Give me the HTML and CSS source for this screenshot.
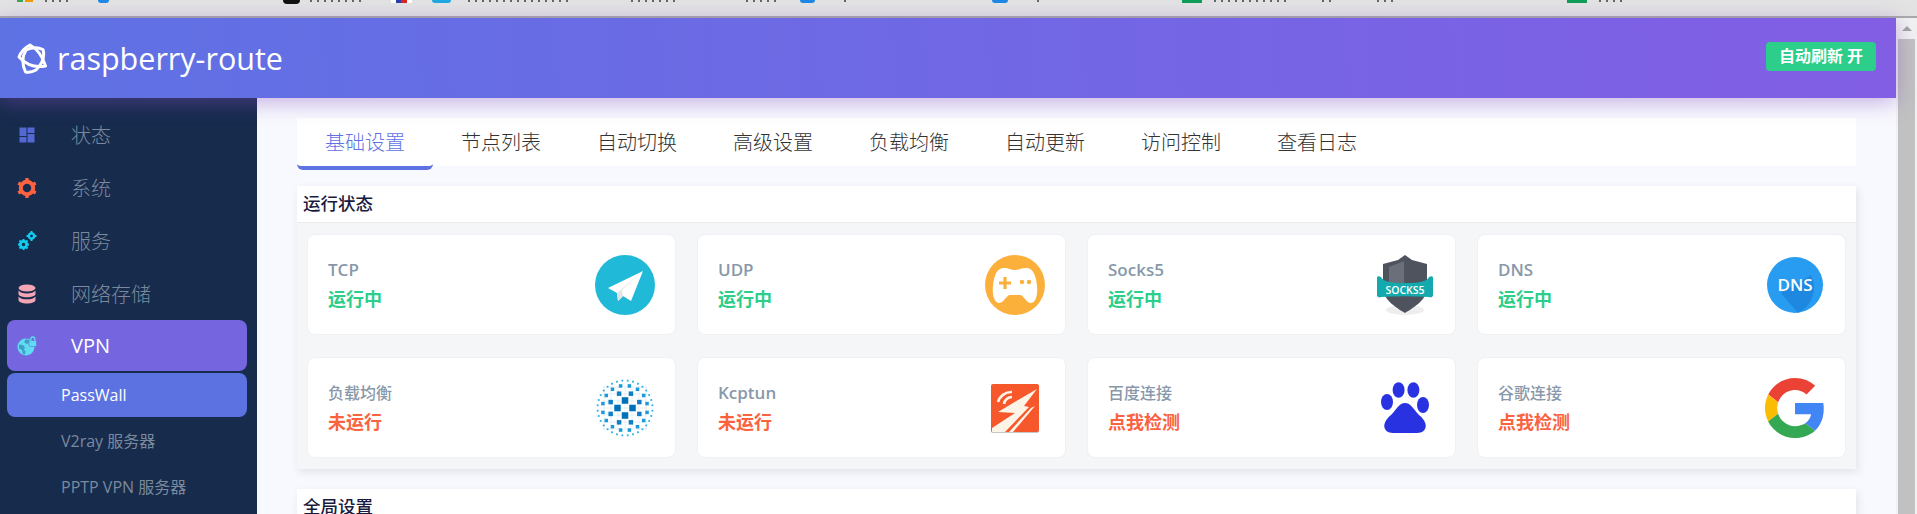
FILE: index.html
```html
<!DOCTYPE html>
<html lang="zh-CN">
<head>
	<meta charset="UTF-8">
	<title>raspberry-route</title>
	<link rel="stylesheet" href="styles.css">
</head>
<body>

<div class="bookmarks" id="bookmarks"></div>

<div class="window">
	<div class="page">
		<header class="topbar">
			<div class="brand">
				<svg class="brand-logo" viewBox="0 0 30 31" fill="none" stroke="#fff" stroke-width="3" stroke-linejoin="round">
					<path d="M13 2 Q24 8 28.500 23 Q13 26 2 14 Q5 6 13 2z"/>
					<path d="M26 6.500 Q29 17 19 27 Q14 30 8.500 29 Q3 17 9 7 Q18 3 26 6.500z"/>
				</svg>
				<span>raspberry-route</span>
			</div>
			<a class="refresh">自动刷新 开</a>
		</header>

		<div class="body">
			<nav class="sidebar">
				<a class="menu">
					<svg class="menu-icon" viewBox="0 0 20 20" fill="#5468d4"><rect x="2.500" y="2.500" width="7" height="8.500"/><rect x="10.500" y="2.500" width="7" height="5.500"/><rect x="2.500" y="12" width="7" height="5.500"/><rect x="10.500" y="9" width="7" height="8.500"/></svg>
					<span>状态</span>
				</a>
				<a class="menu">
					<svg class="menu-icon" viewBox="0 0 20 20"><circle cx="10" cy="10" r="6.200" fill="none" stroke="#fb6340" stroke-width="4"/><g stroke="#fb6340" stroke-width="3.400"><path d="M10 0v3M10 17v3M1.300 5l2.600 1.500M16.100 13.500l2.600 1.500M1.300 15l2.600-1.500M16.100 6.500l2.600-1.500"/></g></svg>
					<span>系统</span>
				</a>
				<a class="menu">
					<svg class="menu-icon" viewBox="0 0 20 20" fill="none" stroke="#11cdef"><circle cx="6.500" cy="13.500" r="3.200" stroke-width="2.800"/><circle cx="14.500" cy="5" r="2.600" stroke-width="2.400"/><path d="M6.500 8v2M6.500 17v2M1 13.500h2M10 13.500h2M2.500 9.500l1.500 1.500M9 16l1.500 1.500M2.500 17.500L4 16M9 11l1.500-1.500M14.500 0v2M14.500 8v2M9.500 5h2M17.500 5h2" stroke-width="2"/></svg>
					<span>服务</span>
				</a>
				<a class="menu">
					<svg class="menu-icon" viewBox="0 0 20 20" fill="#f3a4b5"><ellipse cx="10" cy="4" rx="8.500" ry="3.500"/><path d="M1.500 6.500c1.500 2 4.500 3 8.500 3s7-1 8.500-3v3.500c0 2-4 3.200-8.500 3.200s-8.500-1.200-8.500-3.200z"/><path d="M1.500 12.500c1.500 2 4.500 2.800 8.500 2.800s7-.8 8.500-2.800v3.500c0 2-4 3.500-8.500 3.500s-8.500-1.500-8.500-3.500z"/></svg>
					<span>网络存储</span>
				</a>
				<a class="menu menu-open">
					<svg class="menu-icon" viewBox="0 0 20 20"><circle cx="9" cy="11" r="8.500" fill="#5fdcf0"/><path d="M2 8.500l4 .5 2 2.500-1 2 1.500 2-.5 3-2-.5-1-4-3-1.500zM9 3l3 1v3l-2.500 1L7 6z" fill="#3f9fc8"/><rect x="12" y="4.500" width="7.500" height="6" rx="1" fill="#5fdcf0" stroke="#7566e0" stroke-width=".6"/><path d="M13.800 4.500V3a2 2 0 0 1 4 0v1.500" fill="none" stroke="#5fdcf0" stroke-width="1.300"/></svg>
					<span>VPN</span>
				</a>
				<a class="sub sub-on">PassWall</a>
				<a class="sub">V2ray 服务器</a>
				<a class="sub">PPTP VPN 服务器</a>
			</nav>

			<main class="content">
				<ul class="tabs">
					<li class="tab tab-on">基础设置</li>
					<li class="tab">节点列表</li>
					<li class="tab">自动切换</li>
					<li class="tab">高级设置</li>
					<li class="tab">负载均衡</li>
					<li class="tab">自动更新</li>
					<li class="tab">访问控制</li>
					<li class="tab">查看日志</li>
				</ul>

				<section class="panel">
					<h3 class="panel-title">运行状态</h3>
					<div class="grid">
						<div class="stat">
							<div><p class="stat-name en">TCP</p><p class="stat-val ok">运行中</p></div>
							<svg class="stat-icon" viewBox="0 0 60 60">
								<circle cx="30" cy="30" r="30" fill="#20b9d8"/>
								<path d="M48 16 L13 33 L22 38 L23 46 L28 41 L36 46z" fill="#fff"/>
								<path d="M48 16 L22 38 L23 46 L28 41 L27 35z" fill="#e3e5e7"/>
							</svg>
						</div>
						<div class="stat">
							<div><p class="stat-name en">UDP</p><p class="stat-val ok">运行中</p></div>
							<svg class="stat-icon" viewBox="0 0 60 60">
								<circle cx="30" cy="30" r="30" fill="#fbb03b"/>
								<path d="M19 13 C24 13 26 15 30 15 C34 15 36 13 41 13 C48 13 51 20 52 31 C53 42 50 48 46 48 C42 48 40 43 36 40 H24 C20 43 18 48 14 48 C10 48 7 42 8 31 C9 20 12 13 19 13z" fill="#fff"/>
								<path d="M14 28h12M20 22v12" stroke="#fbb03b" stroke-width="3.200" fill="none"/>
								<circle cx="37" cy="27" r="2.200" fill="#fbb03b"/><circle cx="44" cy="27" r="2.200" fill="#fbb03b"/>
							</svg>
						</div>
						<div class="stat">
							<div><p class="stat-name en">Socks5</p><p class="stat-val ok">运行中</p></div>
							<svg class="stat-icon" viewBox="0 0 60 60">
								<ellipse cx="30" cy="55" rx="19" ry="5" fill="#eeeeef"/>
								<path d="M30 0 L37 5 L52 9 V33 C52 44 40 52 30 58 C20 52 8 44 8 33 V9 L23 5z" fill="#4e535e"/>
								<path d="M29 6 L14 12 V30 H29z" fill="#6a6f79"/>
								<path d="M2 23 C2 21 4 21 6 22 C8 26 14 28 30 28 C46 28 52 26 54 22 C56 21 58 21 58 23 V40 C58 42 56 43 54 42 C38 41 22 41 6 42 C4 43 2 42 2 40z" fill="#14aaad"/>
								<text class="socks-text" x="30" y="39" text-anchor="middle">SOCKS5</text>
							</svg>
						</div>
						<div class="stat">
							<div><p class="stat-name en">DNS</p><p class="stat-val ok">运行中</p></div>
							<svg class="stat-icon" viewBox="0 0 60 60">
								<circle cx="30" cy="30" r="28" fill="#279cf0"/>
								<path d="M16 38 L46 20 A28 28 0 0 1 33 58z" fill="#1e88e0"/>
								<text class="dns-text" x="30" y="36" text-anchor="middle">DNS</text>
							</svg>
						</div>
						<div class="stat">
							<div><p class="stat-name">负载均衡</p><p class="stat-val err">未运行</p></div>
							<svg class="stat-icon" id="blob" viewBox="0 0 60 60"></svg>
						</div>
						<div class="stat">
							<div><p class="stat-name en">Kcptun</p><p class="stat-val err">未运行</p></div>
							<svg class="stat-icon" viewBox="0 0 60 60">
								<rect x="6" y="7" width="48" height="48" rx="2" fill="#c9c5c0"/>
								<rect x="6" y="6" width="48" height="48" rx="2" fill="#f7582b"/>
								<path d="M52 11 L28 25 L13 34 L30 35 L7 50 V54 H20 L44 29 L39 28z" fill="#fdf4e8"/>
								<path d="M50 28 L28 54 L24 54 L46 30z" fill="#fdf4e8"/>
								<path d="M13 24a14 14 0 0 1 14-10M19 26a8 8 0 0 1 8-7" fill="none" stroke="#fdf4e8" stroke-width="2.600"/>
							</svg>
						</div>
						<div class="stat">
							<div><p class="stat-name">百度连接</p><p class="stat-val err">点我检测</p></div>
							<svg class="stat-icon" viewBox="0 0 60 60" fill="#2932e1">
								<ellipse cx="23.600" cy="12" rx="6" ry="7.700"/>
								<ellipse cx="38.400" cy="12" rx="6" ry="7.700"/>
								<ellipse cx="12" cy="24" rx="6" ry="8"/>
								<ellipse cx="48" cy="27" rx="6" ry="8"/>
								<path d="M30 25 C36 25 38 31 44 37 C50 42 52 47 50 51 C48 55 44 55 38 55 H22 C16 55 12 55 10 51 C8 47 10 42 16 37 C22 31 24 25 30 25z"/>
							</svg>
						</div>
						<div class="stat">
							<div><p class="stat-name">谷歌连接</p><p class="stat-val err">点我检测</p></div>
							<svg class="stat-icon" viewBox="0 0 48 48">
								<path fill="#ea4335" d="M24 9.500c3.500 0 6.700 1.200 9.200 3.600l6.900-6.900C35.900 2.400 30.500 0 24 0 14.600 0 6.500 5.400 2.600 13.200l8 6.200C12.400 13.700 17.700 9.500 24 9.500z"/>
								<path fill="#4285f4" d="M47 24.500c0-1.600-.1-3.100-.4-4.500H24v9h12.900c-.6 3-2.200 5.500-4.700 7.200l7.700 6C44.400 38 47 31.900 47 24.500z"/>
								<path fill="#fbbc05" d="M10.500 28.600c-.5-1.400-.8-3-.8-4.600s.3-3.200.8-4.600l-8-6.200C.9 16.500 0 20.100 0 24s.9 7.500 2.600 10.800z"/>
								<path fill="#34a853" d="M24 48c6.500 0 11.900-2.100 15.900-5.800l-7.700-6c-2.200 1.400-4.900 2.300-8.200 2.300-6.300 0-11.600-4.200-13.500-9.900l-8 6.200C6.500 42.600 14.600 48 24 48z"/>
							</svg>
						</div>
					</div>
				</section>

				<section class="panel">
					<h3 class="panel-title">全局设置</h3>
				</section>
			</main>
		</div>
	</div>

	<div class="scrollbar">
		<i class="scroll-up"></i>
		<i class="scroll-thumb"></i>
	</div>
</div>

<script>
	// 书签栏: 只露出底部几个像素 [x, 宽, 类型]
	var marks = [
		[17, 16, "mk-color"], [45, 28, "mk-text"], [98, 11, "mk-blue"], [283, 17, "mk-black"],
		[310, 55, "mk-text"], [391, 21, "mk-flag"], [432, 19, "mk-sky"], [468, 103, "mk-text"],
		[631, 49, "mk-text"], [746, 30, "mk-text"], [800, 15, "mk-blue"], [844, 6, "mk-text"],
		[992, 16, "mk-blue"], [1037, 7, "mk-text"], [1182, 20, "mk-green"], [1214, 74, "mk-text"],
		[1322, 12, "mk-text"], [1377, 17, "mk-text"], [1567, 20, "mk-green"], [1599, 26, "mk-text"]
	];
	var bar = document.getElementById("bookmarks");
	var end = 0;
	for (var m = 0; m < marks.length; m++) {
		var s = document.createElement("span");
		s.className = "mk " + marks[m][2];
		s.style.marginLeft = (marks[m][0] - end) + "px";
		s.style.width = marks[m][1] + "px";
		end = marks[m][0] + marks[m][1];
		bar.appendChild(s);
	}

	// 负载均衡图标: 一圈圈小方块
	var blob = document.getElementById("blob");
	var rings = [
		{r: 7.5, n: 4, s: 6.5, c: "#0070b8", a: 0},
		{r: 15.5, n: 8, s: 4.5, c: "#0d7fc6", a: 22.5},
		{r: 22.5, n: 16, s: 3.5, c: "#1b9ad8", a: 11.25},
		{r: 27.5, n: 32, s: 1.8, c: "#2ab0e6", a: 5.6}
	];
	var html = "";
	for (var g = -21; g <= 21; g += 7) {
		html += '<path d="M' + (30 + g) + ' 8V52M8 ' + (30 + g) + 'H52" stroke="#d3e3ee" stroke-width=".5"/>';
	}
	for (var i = 0; i < rings.length; i++) {
		var ring = rings[i];
		for (var j = 0; j < ring.n; j++) {
			var ang = (ring.a + j * 360 / ring.n) * Math.PI / 180;
			var x = 30 + ring.r * Math.cos(ang) - ring.s / 2;
			var y = 30 + ring.r * Math.sin(ang) - ring.s / 2;
			html += '<rect x="' + x + '" y="' + y + '" width="' + ring.s + '" height="' + ring.s + '" fill="' + ring.c + '"/>';
		}
	}
	blob.innerHTML = html;
</script>
</body>
</html>
```

FILE: styles.css
```css
* {
	margin: 0;
	padding: 0;
	box-sizing: border-box;
}
html, body {
	height: 100%;
	overflow: hidden;
}
body {
	display: flex;
	flex-direction: column;
	font-family: "Open Sans", "Noto Sans CJK SC", sans-serif;
	background: #f8f9fe;
}

/* bookmark bar, only the bottom edge shows */
.bookmarks {
	height: 18px;
	flex: none;
	display: flex;
	background: #e3e3e3;
	border-bottom: 2px solid #a9a9a9;
}
.mk {
	flex: none;
	height: 2px;
}
.mk-text {
	background: repeating-linear-gradient(90deg, #666 0 2px, transparent 2px 7px);
}
.mk-color {
	background: linear-gradient(90deg, #3aa757 0 40%, #e3e3e3 40% 50%, #f29900 50%);
}
.mk-blue {
	height: 3px;
	background: #1e88e5;
	border-radius: 0 0 6px 6px;
}
.mk-black {
	height: 4px;
	background: #111;
	border-radius: 0 0 9px 9px;
}
.mk-flag {
	height: 3px;
	background: linear-gradient(90deg, #fff 0 25%, #2a3fa8 25% 50%, #d22 50% 75%, #fff 75%);
}
.mk-sky {
	height: 3px;
	background: #1fa9e0;
	border-radius: 0 0 8px 8px;
}
.mk-green {
	height: 3px;
	background: #0f9d58;
}

.window {
	flex: 1;
	display: flex;
	min-height: 0;
}
.page {
	flex: 1;
	min-width: 0;
	display: flex;
	flex-direction: column;
}

/* top bar */
.topbar {
	height: 80px;
	flex: none;
	display: flex;
	align-items: center;
	justify-content: space-between;
	padding: 0 20px 0 17px;
	background: linear-gradient(87deg, #5e72e4, #825ee4);
	box-shadow: 0 4px 20px rgba(130, 80, 190, .45);
	position: relative;
	z-index: 2;
}
.brand {
	display: flex;
	align-items: center;
	gap: 10px;
	color: #fff;
	font-size: 30.500px;
}
.brand-logo {
	width: 30px;
	height: 31px;
}
.refresh {
	width: 110px;
	height: 29px;
	line-height: 29px;
	text-align: center;
	margin-top: -3px;
	background: #2dce89;
	border-radius: 4px;
	color: #fff;
	font-size: 16px;
	font-weight: 700;
}

/* side menu */
.body {
	flex: 1;
	min-height: 0;
	display: flex;
}
.sidebar {
	width: 257px;
	flex: none;
	padding: 10px 10px 0 7px;
	background: #172b4d;
	overflow: hidden;
}
.menu {
	height: 53px;
	display: flex;
	align-items: center;
	padding-left: 10px;
	color: #7a8a9e;
	font-size: 20px;
	font-weight: 300;
}
.menu-icon {
	width: 20px;
	height: 20px;
	margin-right: 34px;
}
.menu-open {
	height: 51px;
	margin-bottom: 2px;
	background: #7566e0;
	border-radius: 8px;
	color: #fff;
	font-weight: 400;
}
.sub {
	display: block;
	height: 46px;
	line-height: 48px;
	padding-left: 54px;
	color: #7a8a9e;
	font-size: 16px;
}
.sub-on {
	height: 44px;
	line-height: 44px;
	background: #5b72e0;
	border-radius: 8px;
	color: #fff;
}

/* main */
.content {
	flex: 1;
	min-width: 0;
	padding: 20px 40px 0;
	overflow: hidden;
}
.tabs {
	list-style: none;
	display: flex;
	height: 48px;
	margin-bottom: 20px;
	background: #fff;
}
.tab {
	height: 52px;
	padding: 0 28px;
	line-height: 50px;
	font-size: 20px;
	font-weight: 300;
	color: #333;
}
.tab-on {
	color: #5e72e4;
	border-bottom: 4px solid #5e72e4;
	border-radius: 0 0 6px 6px;
}
.panel {
	margin-bottom: 20px;
	background: #f5f6f8;
	border-radius: 4px 4px 0 0;
	box-shadow: 2px 3px 8px rgba(60, 70, 100, .12);
}
.panel-title {
	height: 37px;
	line-height: 34px;
	padding-left: 6px;
	background: #fff;
	border-bottom: 1px solid #e9ecef;
	font-size: 17.500px;
	font-weight: 500;
	color: #1a1a40;
}
.grid {
	display: grid;
	grid-template-columns: repeat(4, 1fr);
	gap: 22px 21px;
	padding: 11px 10px;
}
.stat {
	height: 101px;
	display: flex;
	align-items: center;
	justify-content: space-between;
	padding: 0 20px;
	background: #fff;
	border: 1px solid #eff1f4;
	border-radius: 8px;
}
.stat-name {
	font-size: 16px;
	line-height: 24px;
	font-weight: 500;
	color: #8898aa;
}
.stat-name.en {
	font-size: 17px;
	font-weight: 600;
}
.stat-val {
	margin-top: 5px;
	font-size: 18px;
	line-height: 24px;
	font-weight: 700;
}
.ok {
	color: #2dce89;
}
.err {
	color: #fb6340;
}
.stat-icon {
	width: 60px;
	height: 60px;
	flex: none;
}
.socks-text {
	font-size: 10.500px;
	font-weight: 600;
	fill: #fff;
}
.dns-text {
	font-size: 17px;
	font-weight: 600;
	fill: #fff;
}

/* window scrollbar */
.scrollbar {
	width: 21px;
	flex: none;
	background: #f1f1f1;
	padding: 0 2px;
}
.scroll-up {
	display: block;
	height: 21px;
	position: relative;
}
.scroll-up::after {
	content: "";
	position: absolute;
	left: 4px;
	top: 8px;
	border: 5px solid transparent;
	border-top: 0;
	border-bottom-color: #a3a3a3;
}
.scroll-thumb {
	display: block;
	height: 100%;
	background: #c1c1c1;
}
```
